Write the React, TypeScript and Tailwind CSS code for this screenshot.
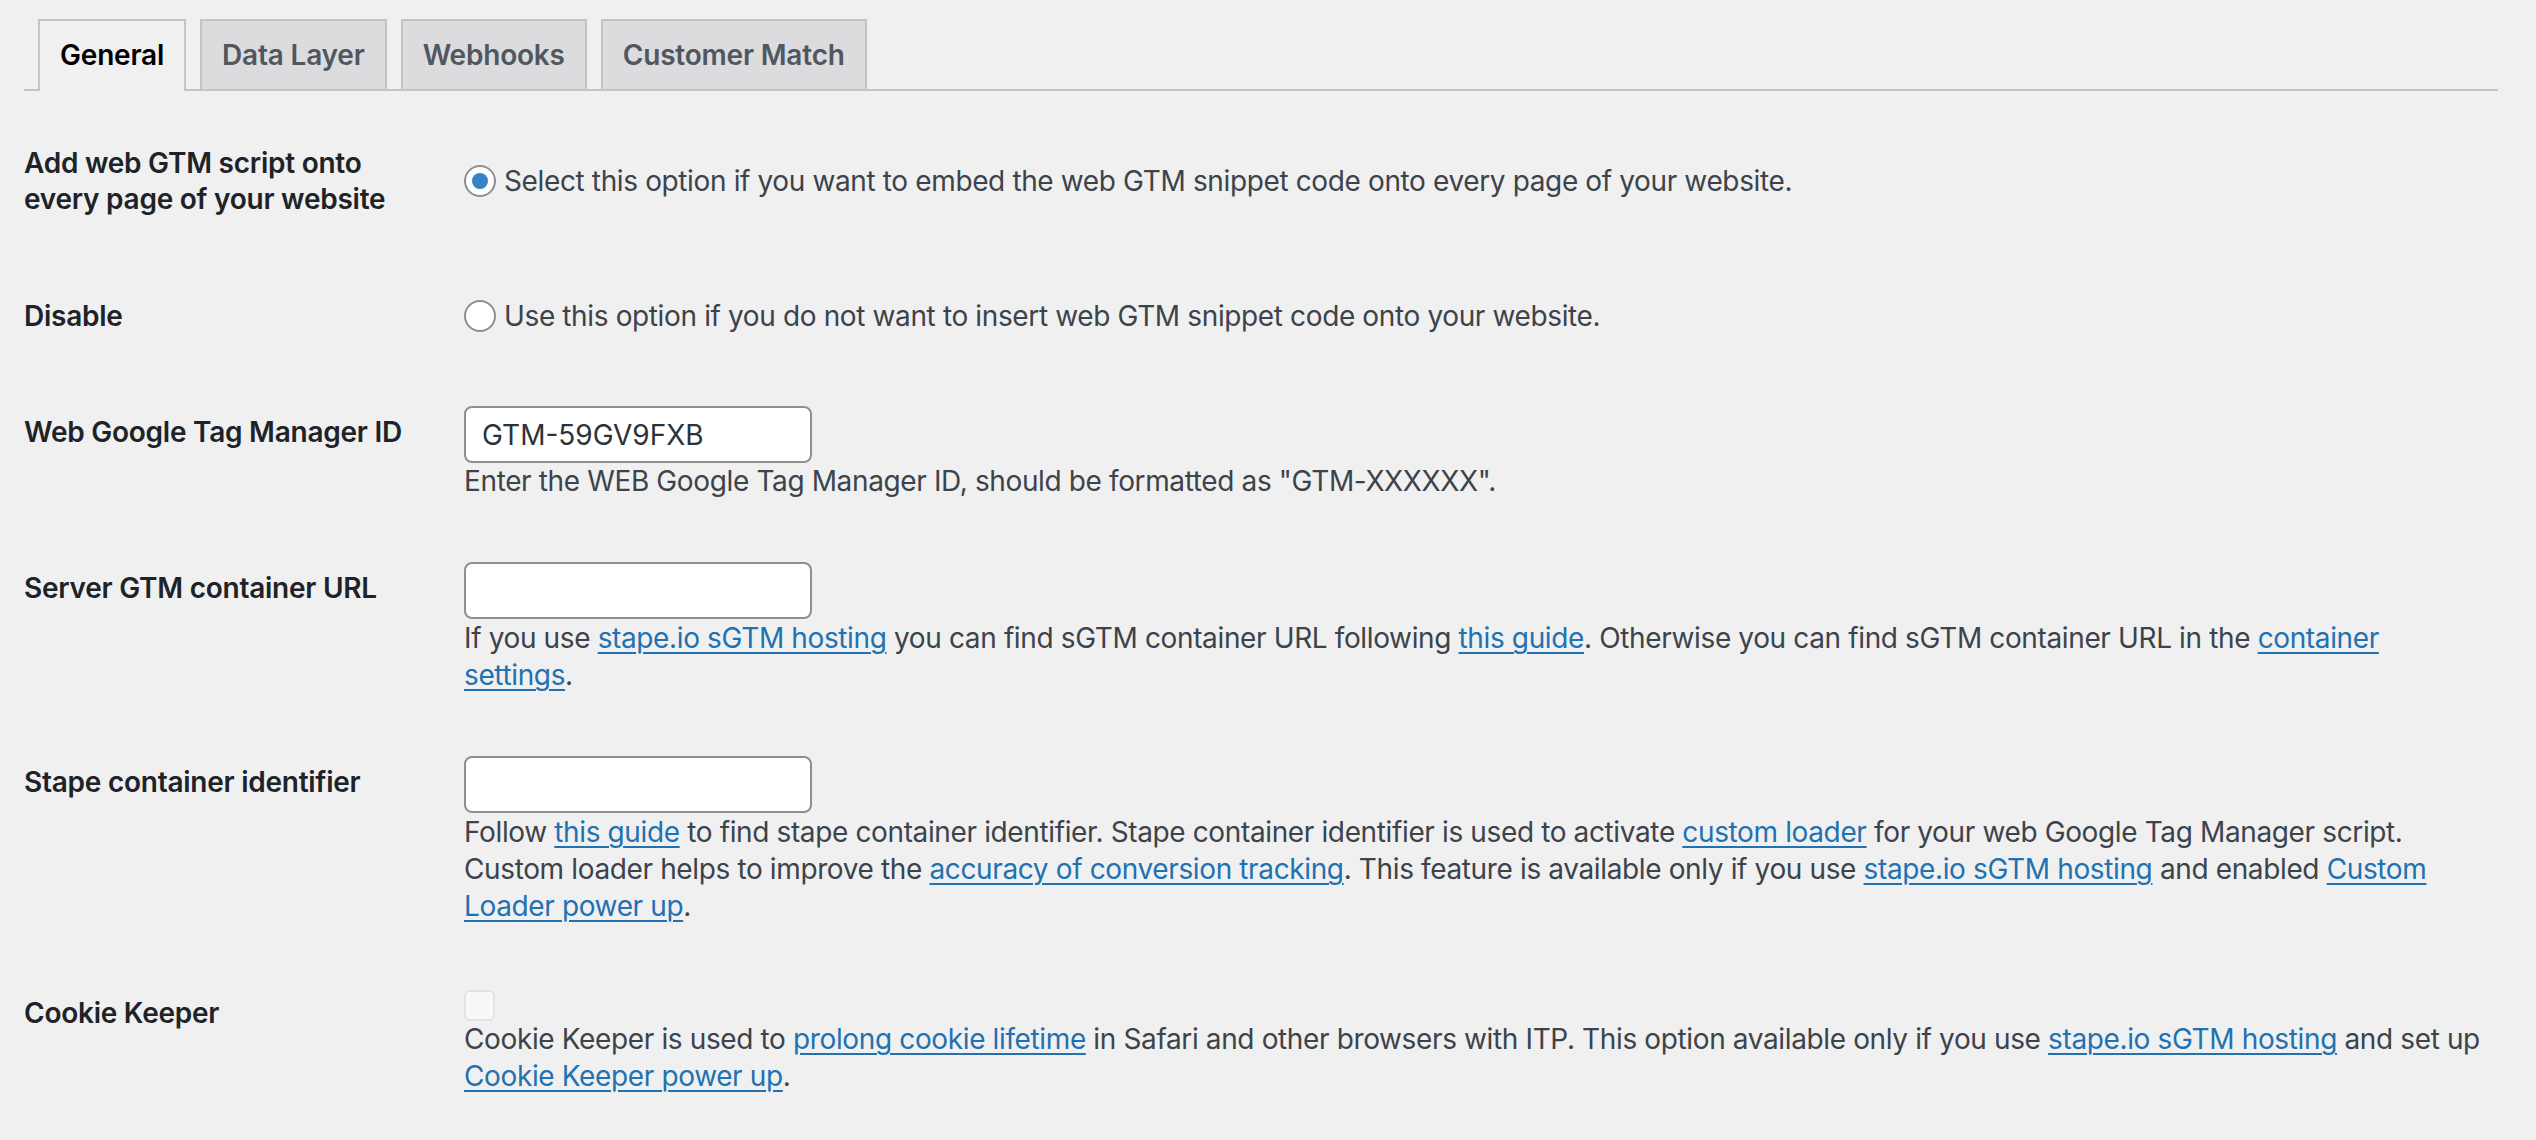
import React from "react";

function Tab({ children, active }: { children: React.ReactNode; active?: boolean }) {
  return (
    <div
      className={
        active
          ? "ml-[14px] -mb-[2px] border-2 border-b-0 border-[#c3c4c7] bg-[#f0f0f1] px-[20px] pt-[10px] pb-[12px] text-[28px] leading-[48px] font-semibold tracking-[-0.2px] text-[#000]"
          : "ml-[14px] border-2 border-b-0 border-[#c3c4c7] bg-[#dcdcde] px-[20px] py-[10px] text-[28px] leading-[48px] font-semibold tracking-[-0.2px] text-[#50575e]"
      }
    >
      {children}
    </div>
  );
}

function A({ children }: { children: React.ReactNode }) {
  return (
    <a href="#" className="text-[#2271b1] underline decoration-[2px] underline-offset-[4px]">
      {children}
    </a>
  );
}

function Th({ children }: { children: React.ReactNode }) {
  return (
    <th className="w-[420px] pt-[40px] pb-[40px] pr-[20px] text-left align-top text-[28px] leading-[36.4px] font-semibold tracking-[-0.25px] text-[#1d2327] whitespace-nowrap">
      {children}
    </th>
  );
}

function Td({ children }: { children: React.ReactNode }) {
  return (
    <td className="py-[30px] pl-[20px] pr-[20px] align-middle text-[28px] tracking-[-0.37px] text-[#3c434a]">
      {children}
    </td>
  );
}

function Radio({ checked }: { checked?: boolean }) {
  return (
    <span className="mr-[8px] flex h-[32px] w-[32px] shrink-0 items-center justify-center rounded-full border-2 border-[#8c8f94] bg-white">
      {checked ? <span className="h-[16px] w-[16px] rounded-full bg-[#3582c4]" /> : null}
    </span>
  );
}

function TextInput({ value }: { value?: string }) {
  return (
    <input
      type="text"
      readOnly
      defaultValue={value ?? ""}
      className="mt-[2px] block h-[57px] w-[348px] rounded-[8px] border-2 border-[#8c8f94] bg-white px-[16px] text-[28px] tracking-normal text-[#2c3338] outline-none"
    />
  );
}

export default function App() {
  return (
    <div className="min-h-[1140px] w-full bg-[#f0f0f1] font-['Inter',sans-serif] text-[#3c434a]">
      <div className="ml-[24px] mr-[38px] pt-[19px]">
        <nav className="flex items-end border-b-2 border-[#c3c4c7]">
          <Tab active>General</Tab>
          <Tab>Data Layer</Tab>
          <Tab>Webhooks</Tab>
          <Tab>Customer Match</Tab>
        </nav>

        <table className="mt-[14px] w-full table-fixed border-collapse">
          <tbody>
            <tr>
              <Th>
                Add web GTM script onto
                <br />
                every page of your website
              </Th>
              <Td>
                <label className="flex items-center leading-[39px] whitespace-nowrap">
                  <Radio checked />
                  <span>Select this option if you want to embed the web GTM snippet code onto every page of your website.</span>
                </label>
              </Td>
            </tr>
            <tr>
              <Th>Disable</Th>
              <Td>
                <label className="flex items-center leading-[39px] whitespace-nowrap">
                  <Radio />
                  <span>Use this option if you do not want to insert web GTM snippet code onto your website.</span>
                </label>
              </Td>
            </tr>
            <tr>
              <Th>Web Google Tag Manager ID</Th>
              <Td>
                <TextInput value="GTM-59GV9FXB" />
                <p className="leading-[37px] whitespace-nowrap">
                  Enter the WEB Google Tag Manager ID, should be formatted as "GTM-XXXXXX".
                </p>
              </Td>
            </tr>
            <tr>
              <Th>Server GTM container URL</Th>
              <Td>
                <TextInput />
                <p className="mt-[1px] leading-[37px] whitespace-nowrap">
                  If you use <A>stape.io sGTM hosting</A> you can find sGTM container URL following <A>this guide</A>. Otherwise you can find sGTM container URL in the <A>container</A>
                  <br />
                  <A>settings</A>.
                </p>
              </Td>
            </tr>
            <tr>
              <Th>Stape container identifier</Th>
              <Td>
                <TextInput />
                <p className="mt-[1px] leading-[37px] whitespace-nowrap">
                  Follow <A>this guide</A> to find stape container identifier. Stape container identifier is used to activate <A>custom loader</A> for your web Google Tag Manager script.
                  <br />
                  Custom loader helps to improve the <A>accuracy of conversion tracking</A>. This feature is available only if you use <A>stape.io sGTM hosting</A> and enabled <A>Custom</A>
                  <br />
                  <A>Loader power up</A>.
                </p>
              </Td>
            </tr>
            <tr>
              <Th>Cookie Keeper</Th>
              <Td>
                <div className="h-[36px] pt-[5px]">
                  <span className="block h-[31px] w-[31px] rounded-[6px] border-2 border-[rgba(220,220,222,0.75)] bg-[rgba(255,255,255,0.5)]" />
                </div>
                <p className="leading-[37px] whitespace-nowrap">
                  Cookie Keeper is used to <A>prolong cookie lifetime</A> in Safari and other browsers with ITP. This option available only if you use <A>stape.io sGTM hosting</A> and set up
                  <br />
                  <A>Cookie Keeper power up</A>.
                </p>
              </Td>
            </tr>
          </tbody>
        </table>
      </div>
    </div>
  );
}
